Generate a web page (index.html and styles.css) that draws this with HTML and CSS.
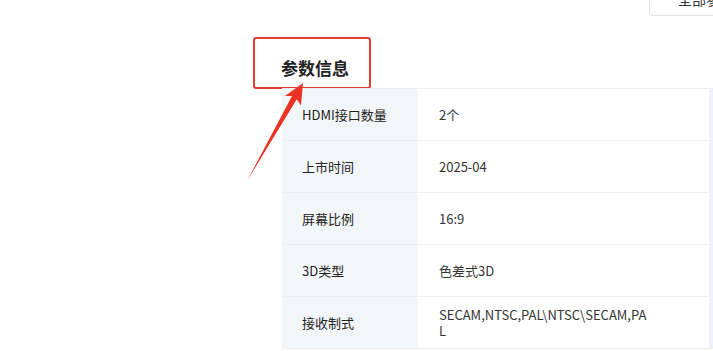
FILE: index.html
```html
<!DOCTYPE html>
<html lang="zh-CN">
<head>
<meta charset="utf-8">
<link rel="stylesheet" href="styles.css">
</head>
<body>
<div class="page">
  <div class="topbar">
    <button class="all-btn">全部参数</button>
  </div>
  <div class="content">
    <h2 class="section-title">参数信息</h2>
    <div class="table-wrap">
      <div class="params">
        <div class="row"><div class="label">HDMI接口数量</div><div class="value"><span class="val-text">2个</span></div></div>
        <div class="row"><div class="label">上市时间</div><div class="value"><span class="val-text">2025-04</span></div></div>
        <div class="row"><div class="label">屏幕比例</div><div class="value"><span class="val-text">16:9</span></div></div>
        <div class="row"><div class="label">3D类型</div><div class="value"><span class="val-text">色差式3D</span></div></div>
        <div class="row"><div class="label">接收制式</div><div class="value"><span class="val-text">SECAM,NTSC,PAL\NTSC\SECAM,PAL</span></div></div>
      </div>
      <div class="strip"></div>
    </div>
  </div>
  <svg class="arrow" width="713" height="351" viewBox="0 0 713 351" aria-hidden="true">
    <polygon points="303,100 301,122.5 296.8,116.2 247,198 292,113 285,113" fill="#ea3323"/>
  </svg>
</div>
</body>
</html>
```

FILE: styles.css
```css
html, body {
  margin: 0;
  padding: 0;
  background: #ffffff;
}
body {
  font-family: "Noto Sans CJK SC", "Noto Sans", sans-serif;
  color: #333333;
  width: 713px;
  height: 351px;
  overflow: hidden;
}
.page {
  position: relative;
  width: 713px;
  height: 351px;
}
.topbar {
  display: flex;
  justify-content: flex-start;
  height: 16px;
  padding-left: 649px;
  margin-top: -17px;
}
.all-btn {
  flex: none;
  width: 90px;
  height: 33px;
  border: 1px solid #e2e2e2;
  border-radius: 4px;
  background: #ffffff;
  font-family: "Noto Sans CJK SC", sans-serif;
  font-size: 14px;
  color: #333333;
  text-align: left;
  padding: 0 0 0 28px;
  line-height: 31px;
  white-space: nowrap;
  overflow: hidden;
}
.content {
  padding-left: 253px;
  padding-top: 38px;
}
.section-title {
  margin: 0;
  width: 114px;
  height: 39px;
  border: 2px solid #e43a2f;
  border-radius: 3px;
  font-size: 17px;
  font-weight: 700;
  color: #222222;
  line-height: 20px;
  padding: 9px 0 0 0;
  display: flex;
  align-items: center;
  text-indent: 26px;
}
.table-wrap {
  margin-left: 29px;
  display: flex;
  border-top: 1px solid #ededed;
  margin-top: -1px;
}
.params {
  width: 427px;
}
.strip {
  width: 4px;
  background: #eef2f6;
}
.row {
  display: flex;
  height: 51px;
  border-bottom: 1px solid #ededed;
}
.label {
  width: 116px;
  flex: none;
  background: #f3f6f9;
  padding-left: 20px;
  display: flex;
  align-items: center;
  font-size: 13px;
  color: #222222;
}
.value {
  flex: 1;
  padding-left: 21px;
  display: flex;
  align-items: center;
  font-size: 13px;
  color: #333333;
}
.val-text {
  width: 212px;
  word-break: break-all;
  line-height: 16px;
}
.arrow {
  position: absolute;
  left: 0;
  top: 0;
  pointer-events: none;
}
```
